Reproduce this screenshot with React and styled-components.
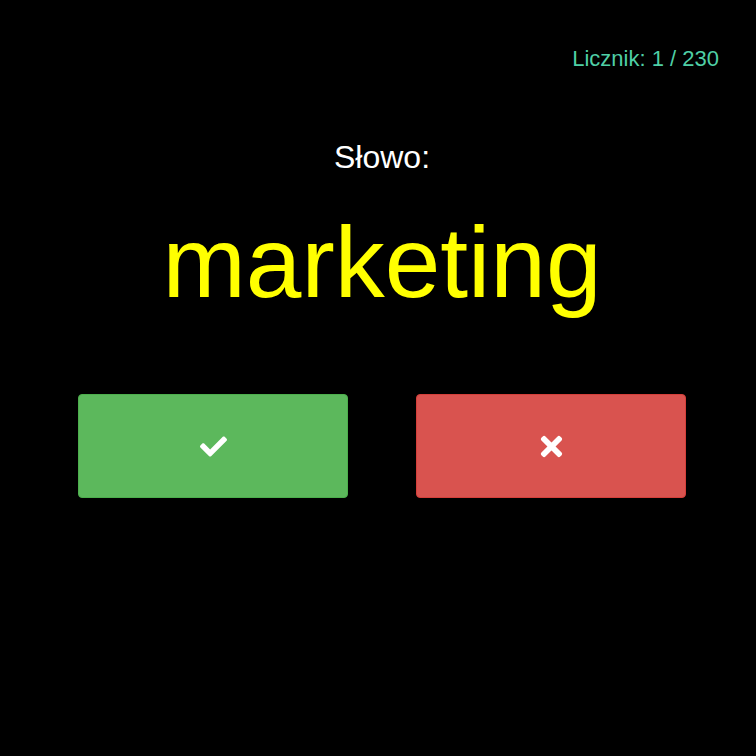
import React from 'react';
import styled, { createGlobalStyle } from 'styled-components';
import { FaCheck, FaTimes } from 'react-icons/fa';

const GlobalStyle = createGlobalStyle`
  html, body {
    margin: 0;
    padding: 0;
    background: #000;
  }
  body {
    font-family: "Liberation Sans", Arial, sans-serif;
  }
`;

const Page = styled.div`
  width: 756px;
  height: 756px;
  box-sizing: border-box;
  padding-left: 8px;
  background: #000;
  display: flex;
  flex-direction: column;
`;

const Header = styled.div`
  display: flex;
  justify-content: flex-end;
  padding: 47px 37px 0 0;
`;

const Counter = styled.span`
  color: #4fcfa6;
  font-size: 22px;
  line-height: 24px;
`;

const Label = styled.div`
  margin-top: 68px;
  text-align: center;
  color: #fff;
  font-size: 32px;
  line-height: 36px;
`;

const Word = styled.div`
  margin-top: 30px;
  text-align: center;
  color: #ffff00;
  font-size: 100px;
  line-height: 115px;
`;

const Actions = styled.div`
  display: flex;
  gap: 68px;
  padding-left: 70px;
  margin-top: 74px;
`;

const palette = {
  ok: { bg: '#5cb85c', border: '#4cae4c' },
  no: { bg: '#d9534f', border: '#d43f3a' },
};

const ActionButton = styled.button`
  width: 270px;
  height: 104px;
  border-radius: 4px;
  border: 1px solid ${({ $kind }) => palette[$kind].border};
  background: ${({ $kind }) => palette[$kind].bg};
  color: #fff;
  display: flex;
  align-items: center;
  justify-content: center;
  padding: 0;
  cursor: pointer;
`;

export default function App() {
  return (
    <Page>
      <GlobalStyle />
      <Header>
        <Counter>Licznik: 1 / 230</Counter>
      </Header>
      <Label>Słowo:</Label>
      <Word>marketing</Word>
      <Actions>
        <ActionButton $kind="ok" aria-label="Znam">
          <FaCheck size={27} />
        </ActionButton>
        <ActionButton $kind="no" aria-label="Nie znam">
          <FaTimes size={31} />
        </ActionButton>
      </Actions>
    </Page>
  );
}
